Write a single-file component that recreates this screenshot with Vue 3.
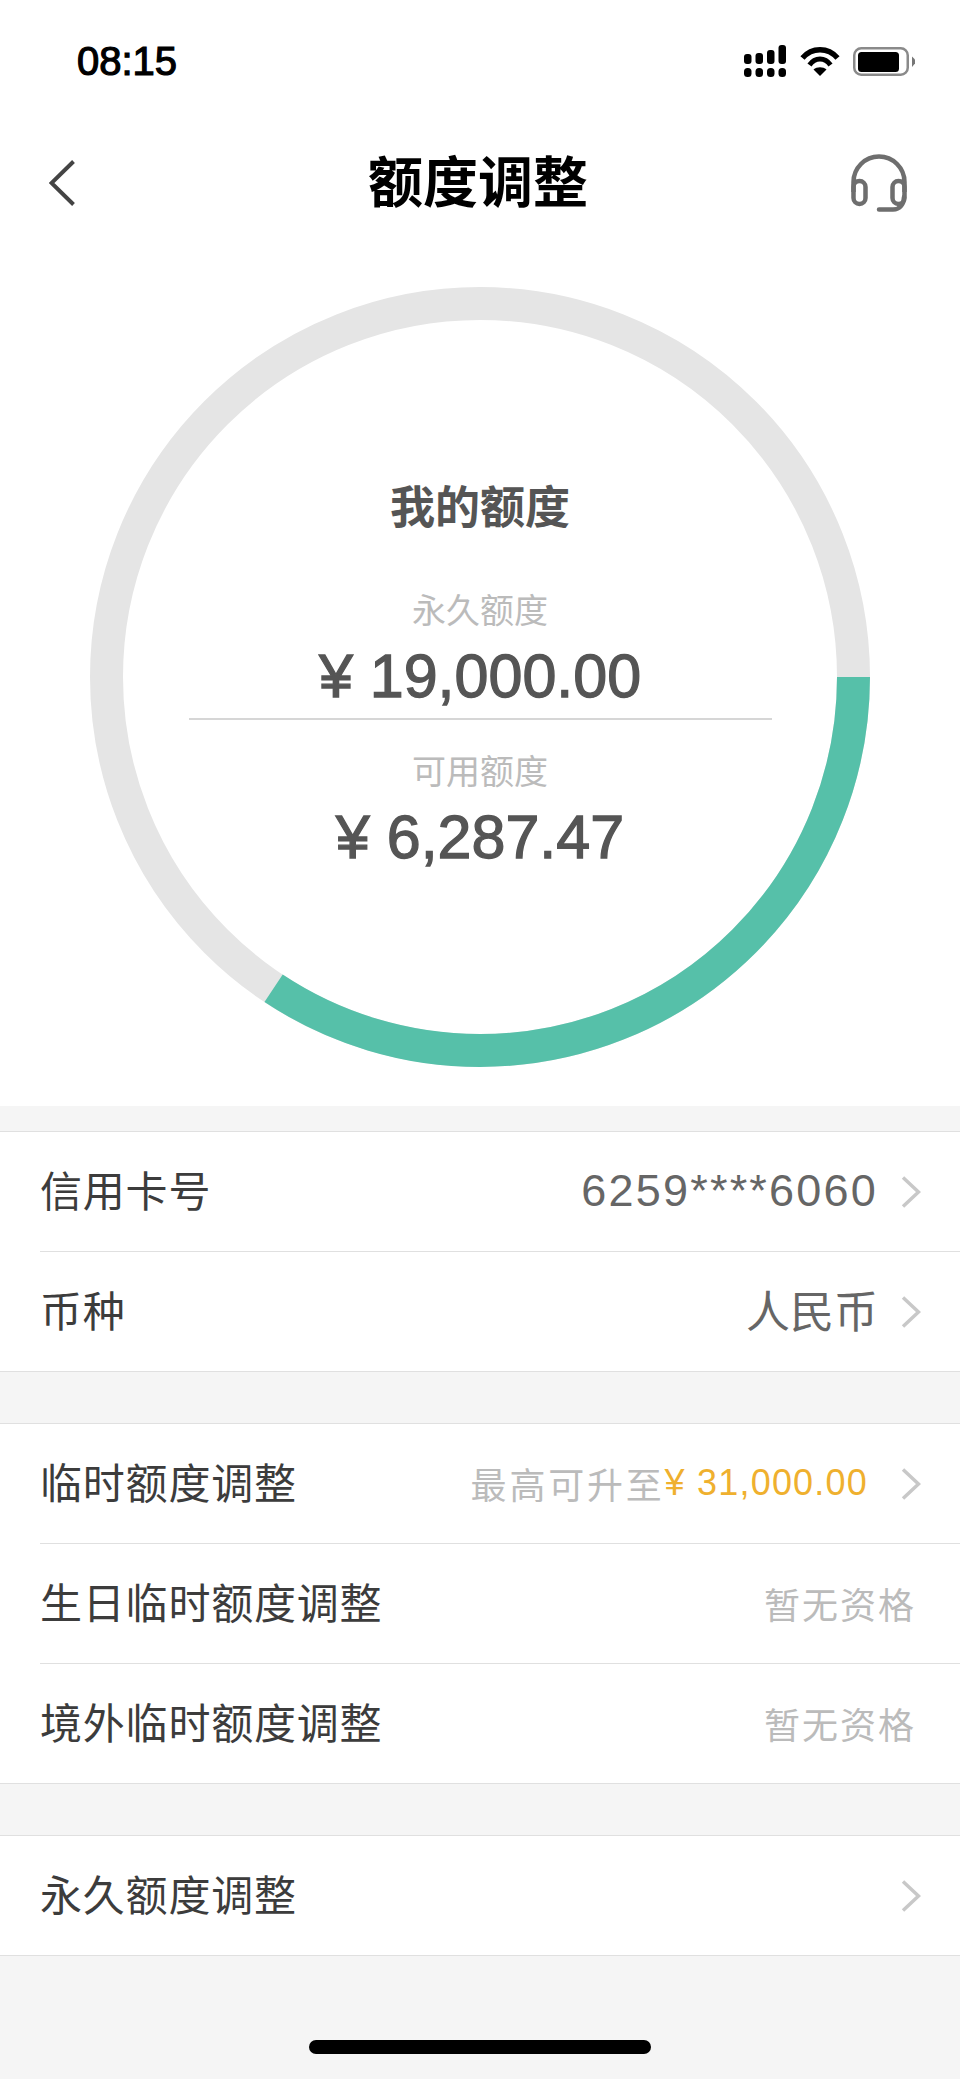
<template>
  <div class="page">
    <div class="top">
      <div class="status">
        <span class="time">08:15</span>
        <div class="status-icons">
          <svg width="42" height="32" viewBox="0 0 42 32" fill="#000">
            <rect x="0" y="9" width="7.5" height="10" rx="3" />
            <rect x="11.5" y="8" width="7.5" height="11" rx="3" />
            <rect x="23" y="5" width="7.5" height="14" rx="3" />
            <rect x="34.5" y="0" width="7.5" height="19" rx="3" />
            <rect x="0" y="23" width="7.5" height="9" rx="3.5" />
            <rect x="11.5" y="23" width="7.5" height="9" rx="3.5" />
            <rect x="23" y="23" width="7.5" height="9" rx="3.5" />
            <rect x="34.5" y="23" width="7.5" height="9" rx="3.5" />
          </svg>
          <svg class="wifi" width="40" height="29" viewBox="0 0 40 29">
            <path d="M2.5 11C12 0 28 0 37.500 11" fill="none" stroke="#000" stroke-width="5.500" />
            <path d="M9.500 18C15 10 25 10 30.500 18" fill="none" stroke="#000" stroke-width="5" />
            <path d="M13.500 22.500C17 19.500 23 19.500 26.500 22.500L20 29Z" fill="#000" />
          </svg>
          <svg class="battery" width="62" height="29" viewBox="0 0 62 29">
            <rect x="1.250" y="1.250" width="53.500" height="26.500" rx="7" fill="none" stroke="#8a8a8a" stroke-width="2.500" />
            <rect x="5" y="5" width="41" height="20" rx="3.500" fill="#000" />
            <path d="M59 9.500L62 12.500V16.500L59 20Z" fill="#777" />
          </svg>
        </div>
      </div>

      <div class="nav">
        <svg class="back" width="26" height="46" viewBox="0 0 26 46">
          <path d="M24.500 1.500L2.500 23L24.500 44.500" fill="none" stroke="#444" stroke-width="4" />
        </svg>
        <h1 class="title">额度调整</h1>
        <svg class="service" width="56" height="58" viewBox="0 0 56 58" fill="none" stroke="#6e6e6e" stroke-width="4.500">
          <path d="M2.500 38V28a25.500 25.500 0 0 1 51 0V38" />
          <rect x="2.500" y="27" width="12" height="23" rx="6" />
          <rect x="41.500" y="27" width="12" height="23" rx="6" />
          <path d="M53 43C53 50 49 55.500 42 55.500H28" stroke-linecap="round" />
        </svg>
      </div>

      <div class="hero">
        <div class="ring">
          <svg width="780" height="780" viewBox="0 0 780 780">
            <circle cx="390" cy="390" r="373.500" fill="none" stroke="#e5e5e5" stroke-width="33" />
            <circle
              cx="390"
              cy="390"
              r="373.500"
              fill="none"
              stroke="#56c0a9"
              stroke-width="33"
              :stroke-dasharray="arcDash"
            />
          </svg>
          <div class="ring-body">
            <div class="ring-title">我的额度</div>
            <div class="amount-label first">永久额度</div>
            <div class="amount">¥ 19,000.00</div>
            <div class="ring-line"></div>
            <div class="amount-label">可用额度</div>
            <div class="amount">¥ 6,287.47</div>
          </div>
        </div>
      </div>
    </div>

    <div v-for="(group, g) in groups" :key="g" class="group">
      <div v-for="row in group" :key="row.label" class="row">
        <span class="label">{{ row.label }}</span>
        <span class="right">
          <span v-if="row.number" class="number">{{ row.number }}</span>
          <span v-if="row.value" class="value">{{ row.value }}</span>
          <span v-if="row.hint" class="hint">{{ row.hint }}</span>
          <span v-if="row.gold" class="gold">{{ row.gold }}</span>
          <svg v-if="row.arrow" class="chevron" width="20" height="32" viewBox="0 0 20 32">
            <path d="M2 1.500L17.500 16L2 30.500" fill="none" stroke="#c8c8c8" stroke-width="3.500" />
          </svg>
        </span>
      </div>
    </div>

    <div class="home-bar"></div>
  </div>
</template>

<script setup>
const circumference = 2 * Math.PI * 373.5;
// arc runs clockwise from 3 o'clock, about a third of the ring
const arcDash = `${(circumference * 123.5) / 360} ${circumference}`;

const groups = [
  [
    { label: "信用卡号", number: "6259****6060", arrow: true },
    { label: "币种", value: "人民币", arrow: true },
  ],
  [
    { label: "临时额度调整", hint: "最高可升至", gold: "¥ 31,000.00", arrow: true },
    { label: "生日临时额度调整", hint: "暂无资格" },
    { label: "境外临时额度调整", hint: "暂无资格" },
  ],
  [{ label: "永久额度调整", arrow: true }],
];
</script>

<style scoped>
.page {
  position: relative;
  width: 960px;
  height: 2079px;
  overflow: hidden;
  background: #f5f5f5;
  font-family: "Liberation Sans", "Noto Sans CJK SC", sans-serif;
}

.top {
  background: #fff;
}

.status {
  height: 122px;
  display: flex;
  align-items: center;
  justify-content: space-between;
  padding: 0 45px 0 77px;
}

.time {
  font-size: 40px;
  color: #000;
  -webkit-text-stroke: 1.2px #000;
}

.status-icons {
  display: flex;
  align-items: center;
}

.wifi {
  margin-left: 14px;
}

.battery {
  margin-left: 13px;
}

.nav {
  height: 122px;
  display: grid;
  grid-template-columns: 1fr auto 1fr;
  align-items: center;
  padding: 0 53px 0 49px;
}

.title {
  margin: 0;
  font-size: 55px;
  font-weight: 700;
  line-height: 64px;
  color: #000;
}

.service {
  justify-self: end;
}

.hero {
  padding: 43px 0 39px;
  display: flex;
  justify-content: center;
}

.ring {
  display: grid;
  width: 780px;
  height: 780px;
}

.ring svg,
.ring-body {
  grid-area: 1 / 1;
}

.ring-body {
  display: flex;
  flex-direction: column;
  align-items: center;
  padding-top: 194px;
}

.ring-title {
  font-size: 45px;
  font-weight: 700;
  line-height: 56px;
  color: #555;
}

.amount-label {
  font-size: 34px;
  line-height: 44px;
  color: #bbb;
}

.amount-label.first {
  margin-top: 52px;
}

.amount {
  margin-top: 9px;
  font-size: 61px;
  line-height: 68px;
  color: #555;
  -webkit-text-stroke: 1.300px #555;
}

.ring-line {
  width: 583px;
  height: 2px;
  margin: 8px 0 30px;
  background: #d6d6d6;
}

.group {
  margin-top: 51px;
  background: #fff;
  border-top: 1px solid #e0e0e0;
}

.top + .group {
  margin-top: 25px;
}

.row {
  position: relative;
  height: 120px;
  display: flex;
  align-items: center;
  justify-content: space-between;
  padding: 0 44px 0 40px;
  font-size: 42px;
}

.row::after {
  content: "";
  position: absolute;
  left: 40px;
  right: 0;
  bottom: 0;
  height: 1px;
  background: #e0e0e0;
}

.row:last-child::after {
  left: 0;
}

.label {
  margin-bottom: 8px;
  color: #3c3c3c;
  letter-spacing: 0.800px;
}

.right {
  display: flex;
  align-items: center;
}

.number {
  margin-bottom: 2px;
  font-size: 45px;
  letter-spacing: 2.200px;
  color: #666;
}

.value {
  margin-bottom: 6px;
  font-size: 44px;
  color: #666;
}

.hint {
  margin-bottom: 2px;
  font-size: 36px;
  letter-spacing: 2px;
  color: #bbb;
}

.hint:has(+ .gold) {
  letter-spacing: 2.800px;
}

.gold {
  margin-bottom: 2px;
  font-size: 36px;
  letter-spacing: 1.200px;
  color: #efb02e;
}

.gold + .chevron {
  margin-left: 33px;
}

.chevron {
  margin: 0 -5px 0 23px;
}

.home-bar {
  position: absolute;
  left: 309px;
  bottom: 25px;
  width: 342px;
  height: 14px;
  border-radius: 7px;
  background: #000;
}
</style>
